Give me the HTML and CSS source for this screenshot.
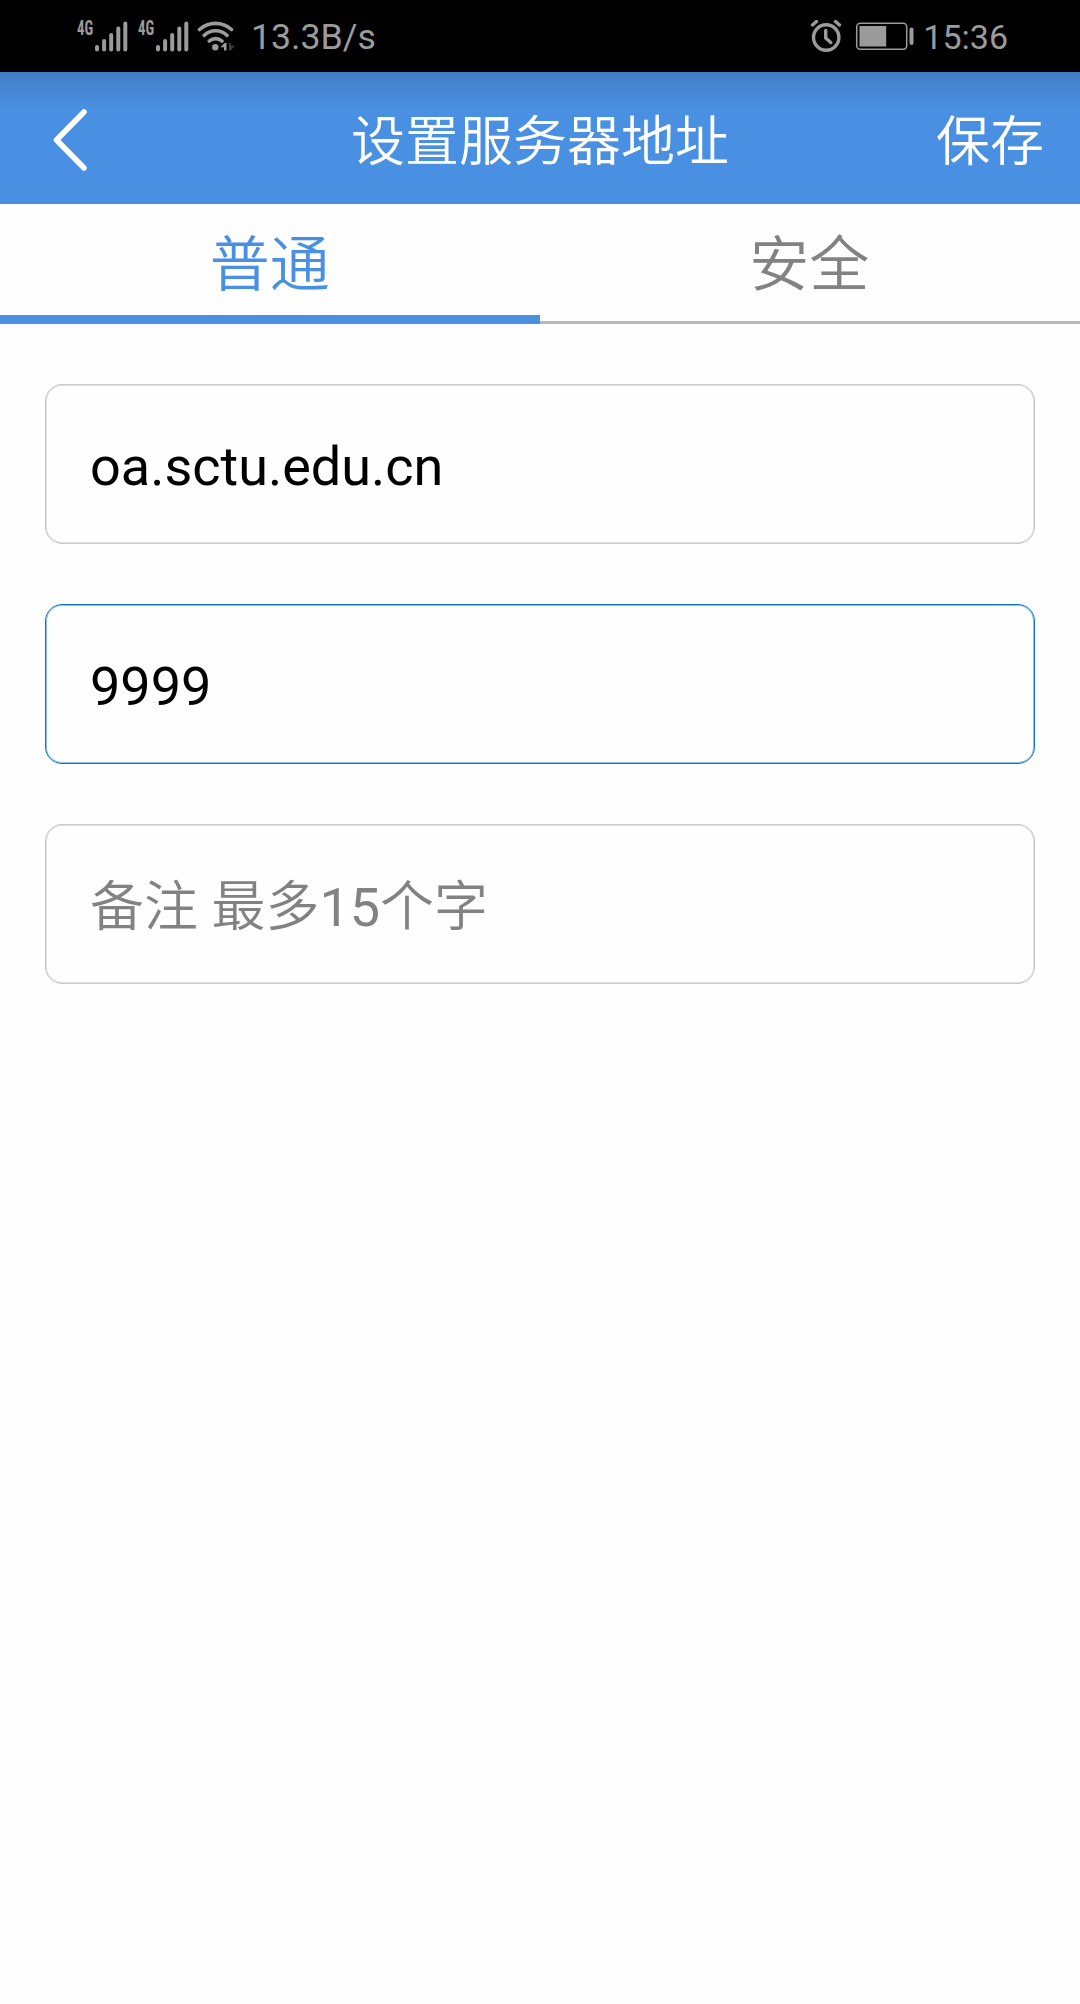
FILE: index.html
```html
<!DOCTYPE html>
<html lang="zh-CN">
<head>
  <meta charset="UTF-8">
  <meta name="viewport" content="width=1080, initial-scale=1.0">
  <title>设置服务器地址</title>
  <link rel="stylesheet" href="styles.css">
</head>
<body>
  <!-- 状态栏 -->
  <div class="status-bar">
    <div class="status-left">
      <div class="signal">
        <span class="signal-type">4G</span>
        <svg class="signal-bars" viewBox="0 0 33 32">
          <path d="M2 27v2.500M9.100 21v8.500M16.200 15v14.500M23.300 8.500v21M30.300 3.500v26"/>
        </svg>
      </div>
      <div class="signal">
        <span class="signal-type">4G</span>
        <svg class="signal-bars" viewBox="0 0 33 32">
          <path d="M2 27v2.500M9.100 21v8.500M16.200 15v14.500M23.300 8.500v21M30.300 3.500v26"/>
        </svg>
      </div>
      <svg class="wifi" viewBox="0 0 38 32">
        <path class="wifi-arc" d="M2.500 9.500C11.500 1.300 25.500 1.300 34.500 9.500M7.200 15.300C14 9.300 23.300 9.300 30 15.300M12.300 21C16 17.800 21.300 17.800 25 21"/>
        <circle cx="18.300" cy="27.300" r="3.200"/>
        <path d="M23.500 27.300l4-4.300h2v7.500h-2.500v-3.200z"/>
        <path class="wifi-down" d="M32 23h1.800v2.500h4l-4 5h-1.800z"/>
      </svg>
      <span class="net-speed">13.3B/s</span>
    </div>
    <div class="status-right">
      <svg class="alarm" viewBox="0 0 32 32">
        <circle cx="16.200" cy="17.500" r="12.700"/>
        <path d="M2.500 5l4-3.500M29.500 5l-4-3.500M15.700 10.500v7.500l5 4.500"/>
      </svg>
      <svg class="battery" viewBox="0 0 60 30">
        <rect class="battery-case" x="1.700" y="2.200" width="50" height="26" rx="3.500"/>
        <rect x="4.500" y="5" width="26.700" height="20.500"/>
        <rect x="54.500" y="6.500" width="4" height="17.500" rx="2"/>
      </svg>
      <span class="clock">15:36</span>
    </div>
  </div>

  <header class="header">
    <button class="back-btn">
      <svg viewBox="0 0 36 62">
        <path d="M32 3L4.500 31l27.500 28"/>
      </svg>
    </button>
    <h1 class="header-title">设置服务器地址</h1>
    <button class="save-btn">保存</button>
  </header>

  <nav class="tabs">
    <button class="tab active">普通</button>
    <button class="tab">安全</button>
  </nav>

  <form class="server-form">
    <input type="text" class="field" value="oa.sctu.edu.cn">
    <input type="text" class="field current" value="9999">
    <input type="text" class="field remark" placeholder="备注 最多15个字">
  </form>
</body>
</html>
```

FILE: styles.css
```css
:root {
  --blue: #4990e2;
  --focus: #1273c4;
  --focus-light: #8fc0ea;
  --border: #c8c8c8;
  --border-light: #dfdfdf;
  --status: #9b9b9b;
  --gray: #828282;
}
* {
  box-sizing: border-box;
}
body {
  margin: 0;
  min-height: 100vh;
  background: #fefefe;
  font-family: Roboto, 'Noto Sans CJK SC DemiLight', 'Noto Sans CJK SC', sans-serif;
}
button {
  padding: 0;
  border: none;
  background: none;
  font-family: inherit;
  cursor: pointer;
}
/* 状态栏 */
.status-bar {
  height: 72px;
  padding: 0 72px 0 77px;
  display: flex;
  justify-content: space-between;
  background: #000;
  color: var(--status);
  fill: var(--status);
}
.status-left,
.status-right {
  display: flex;
  align-items: center;
}
.signal {
  display: flex;
  align-items: flex-start;
  width: 61px;
  height: 32px;
}
.signal-type {
  width: 18px;
  flex-shrink: 0;
  font-family: 'Roboto Condensed', Roboto, sans-serif;
  font-size: 20px;
  font-weight: 700;
  line-height: 17px;
  transform: scaleX(0.74);
  transform-origin: left;
}
.signal-bars {
  width: 33px;
  height: 32px;
  fill: none;
  stroke: var(--status);
  stroke-width: 4;
  stroke-linecap: round;
}
.wifi {
  width: 38px;
  height: 32px;
  margin-left: -2px;
}
.wifi-arc {
  fill: none;
  stroke: var(--status);
  stroke-width: 3.6;
  stroke-linecap: round;
}
.wifi-down {
  fill: #3c3c3c;
}
.net-speed {
  padding-top: 2px;
  margin-left: 16px;
  font-size: 35.7px;
  line-height: 72px;
}
.alarm {
  width: 32px;
  height: 32px;
  fill: none;
  stroke: var(--status);
  stroke-width: 3.4;
  stroke-linecap: round;
}
.battery {
  width: 60px;
  height: 30px;
  margin-left: 13px;
}
.battery-case {
  fill: none;
  stroke: var(--status);
  stroke-width: 1.5;
}
.clock {
  padding-top: 2px;
  margin-left: 8px;
  font-size: 34px;
  line-height: 72px;
}
/* 标题栏 */
.header {
  height: 132px;
  padding: 0 36px 0 52px;
  display: grid;
  grid-template-columns: 264px 1fr 264px;
  align-items: center;
  background: linear-gradient(#3f7cc3 0, #4583cf 10px, #4990e2 38px);
  color: #fff;
}
.back-btn {
  width: 36px;
  height: 62px;
  margin-top: 3px;
}
.back-btn svg {
  display: block;
  fill: none;
  stroke: #fff;
  stroke-width: 5.6;
  stroke-linecap: round;
  stroke-linejoin: round;
}
.header-title {
  margin: 0 16px 0 0;
  padding-top: 9px;
  font-size: 54px;
  font-weight: 400;
  line-height: 123px;
  text-align: center;
}
.save-btn {
  justify-self: end;
  padding-top: 9px;
  color: #fff;
  font-size: 54px;
  line-height: 123px;
}
/* 选项卡 */
.tabs {
  display: flex;
  height: 120px;
}
.tab {
  flex: 1;
  padding: 6px 1px 0 0;
  border-bottom: 3px solid #b8b8b8;
  color: var(--gray);
  font-size: 60px;
  line-height: 111px;
}
.tab.active {
  padding: 12px 0 0;
  border-bottom: 9px solid var(--blue);
  color: var(--blue);
  line-height: 99px;
}
/* 表单 */
.server-form {
  padding: 60px 45px;
  display: flex;
  flex-direction: column;
  gap: 60px;
}
.field {
  width: 100%;
  height: 160px;
  padding: 5px 44px 0;
  border: 1px solid var(--border);
  border-radius: 17px;
  box-shadow: inset 0 0 0 1px var(--border-light);
  outline: none;
  background: #fefefe;
  color: #000;
  font-family: inherit;
  font-size: 54px;
}
.field.current {
  border-color: var(--focus);
  box-shadow: inset 0 0 0 1px var(--focus-light);
}
.field.remark {
  padding-top: 7px;
}
.field::placeholder {
  color: var(--gray);
  opacity: 1;
}
```
